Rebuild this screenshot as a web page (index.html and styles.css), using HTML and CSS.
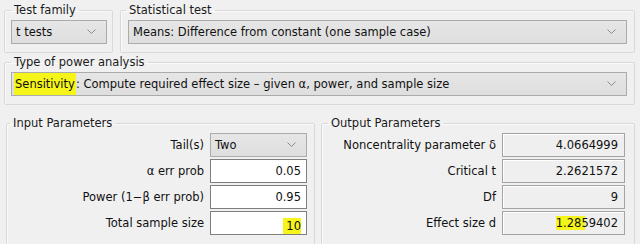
FILE: index.html
```html
<!DOCTYPE html>
<html lang="en">
<head>
    <meta charset="UTF-8">
    <title>G*Power - sensitivity</title>
    <link rel="stylesheet" href="styles.css">
</head>
<body>
    <div id="panel">
        <div class="top-row">
            <fieldset class="group family">
                <legend>Test family</legend>
                <div class="combo">t tests<svg class="arrow" width="9" height="6" viewBox="0 0 9 6"><path d="M0.5 0.5 L4.5 4.5 L8.5 0.5" fill="none" stroke="#8a8a8a" stroke-width="1"/></svg></div>
            </fieldset>
            <fieldset class="group stat">
                <legend>Statistical test</legend>
                <div class="combo">Means: Difference from constant (one sample case)<svg class="arrow" width="9" height="6" viewBox="0 0 9 6"><path d="M0.5 0.5 L4.5 4.5 L8.5 0.5" fill="none" stroke="#8a8a8a" stroke-width="1"/></svg></div>
            </fieldset>
        </div>

        <fieldset class="group analysis">
            <legend>Type of power analysis</legend>
            <div class="combo"><span><span class="mark tall">Sensitivity</span>: Compute required effect size – given α, power, and sample size</span><svg class="arrow" width="9" height="6" viewBox="0 0 9 6"><path d="M0.5 0.5 L4.5 4.5 L8.5 0.5" fill="none" stroke="#8a8a8a" stroke-width="1"/></svg></div>
        </fieldset>

        <div class="params">
            <fieldset class="group input">
                <legend>Input Parameters</legend>
                <div class="rows">
                    <label>Tail(s)</label>
                    <div class="combo">Two<svg class="arrow" width="9" height="6" viewBox="0 0 9 6"><path d="M0.5 0.5 L4.5 4.5 L8.5 0.5" fill="none" stroke="#8a8a8a" stroke-width="1"/></svg></div>
                    <label>α err prob</label>
                    <div class="field">0.05</div>
                    <label>Power (1−β err prob)</label>
                    <div class="field">0.95</div>
                    <label>Total sample size</label>
                    <div class="field"><span class="mark sample">10</span></div>
                </div>
            </fieldset>
            <fieldset class="group output">
                <legend>Output Parameters</legend>
                <div class="rows">
                    <label>Noncentrality parameter δ</label>
                    <div class="field out">4.0664999</div>
                    <label>Critical t</label>
                    <div class="field out">2.2621572</div>
                    <label>Df</label>
                    <div class="field out">9</div>
                    <label>Effect size d</label>
                    <div class="field out"><span class="mark partial">1.285</span>9402</div>
                </div>
            </fieldset>
        </div>
    </div>
</body>
</html>
```

FILE: styles.css
```css
html, body {
    margin: 0;
    padding: 0;
    background: #f0f0f0;
}
#panel {
    font-family: "DejaVu Sans", sans-serif;
    font-size: 11.5px;
    color: #111;
    padding: 2px 5px 0 4px;
}
.group {
    margin: 0;
    border: 1px solid #d9d9d9;
    border-radius: 2px;
    background: #f0f0f0;
    box-shadow: inset 1px 1px 0 #fafafa;
}
.group legend {
    margin-left: 0;
    padding: 0 3px;
    line-height: 16px;
    color: #1a1a1a;
}
.top-row {
    display: flex;
    gap: 7px;
}
.family {
    width: 109px;
    box-sizing: border-box;
    padding: 2px 5px 8px 6px;
}
.stat {
    flex: 1;
    padding: 2px 7px 8px 7px;
}
.stat legend {
    margin-left: -2px;
}
.analysis {
    margin-top: 1px;
    padding: 2px 7px 8px 6px;
}
.combo {
    display: flex;
    align-items: center;
    justify-content: space-between;
    height: 22px;
    padding: 0 10px 0 4px;
    border: 1px solid #ababab;
    background: linear-gradient(#e6e6e6, #dedede);
    white-space: nowrap;
}
.arrow {
    flex: none;
    margin-left: 8px;
}
.mark {
    background: #f5f51a;
}
.mark.tall {
    padding: 4px 1px 4px 1px;
    margin-left: -2px;
}
.params {
    display: flex;
    gap: 6px;
    margin-top: 10px;
    padding-left: 2px;
}
.input {
    width: 309px;
    box-sizing: border-box;
    padding: 2px 7px 12px 6px;
}
.input legend {
    margin-left: -3px;
}
.output {
    flex: 1;
    padding: 2px 9px 12px 6px;
}
.rows {
    display: grid;
    row-gap: 2px;
    column-gap: 6px;
    align-items: center;
}
.input .rows {
    grid-template-columns: 1fr 97px;
}
.output .rows {
    grid-template-columns: 1fr 123px;
}
.rows label {
    text-align: right;
}
.field {
    height: 22px;
    line-height: 22px;
    padding: 0 5px;
    text-align: right;
    border: 1px solid #7f7f7f;
    background: #ffffff;
}
.field.out {
    padding: 0 6px;
    border-color: #a3a3a3;
    background: #efefef;
    box-shadow: inset 1px 1px 0 #ffffff;
}
.mark.sample {
    display: inline-block;
    padding: 0 0 0 3px;
    line-height: 16px;
    vertical-align: -3px;
}
.mark.partial {
    background: linear-gradient(to right, #f5f51a 88%, transparent 88%);
}
```
